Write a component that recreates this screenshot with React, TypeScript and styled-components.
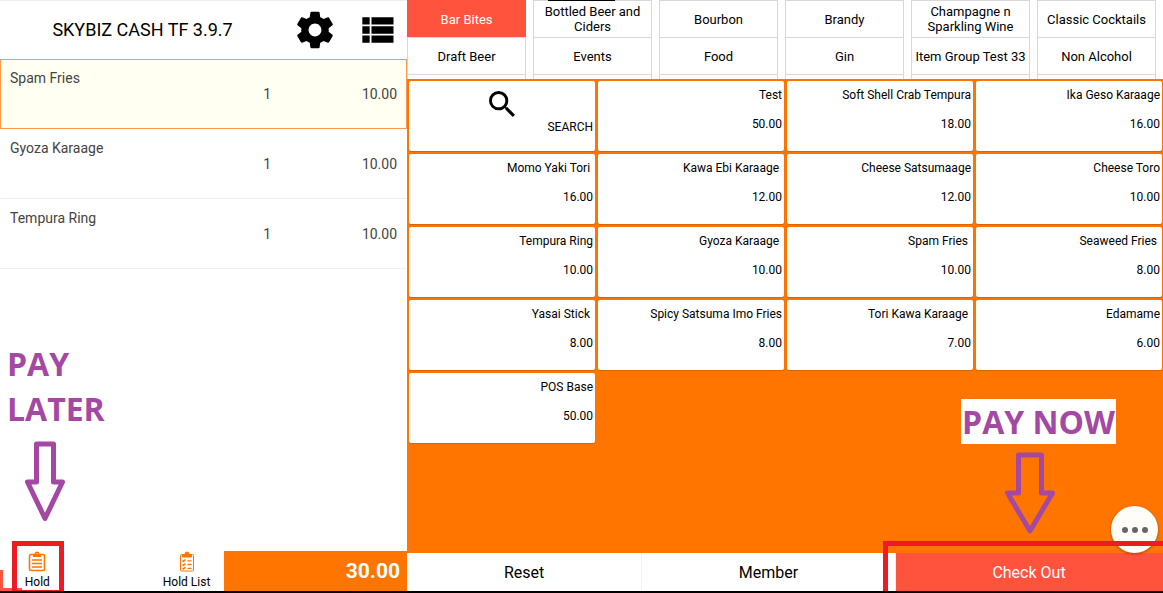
import React from "react";
import styled, { createGlobalStyle } from "styled-components";

const ORANGE = "#ff7500";
const CORAL = "#ff533d";
const PURPLE = "#a349a4";
const MARKER = "#ed1c24";

const GlobalStyle = createGlobalStyle`
  *, *::before, *::after { box-sizing: border-box; }
  body { margin: 0; background: #fff; font-family: Roboto, "Liberation Sans", sans-serif; color: #000; }
  button { font: inherit; color: inherit; border: 0; padding: 0; margin: 0; background: none; cursor: pointer; }
  h1, p, ul { margin: 0; padding: 0; list-style: none; }
`;

const Screen = styled.div`
  position: relative;
  display: grid;
  grid-template-columns: 35fr 65fr;
  min-height: 100vh;
  border-bottom: 2px solid #000;
  overflow: hidden;
`;

const OrderPanel = styled.section`
  position: relative;
  display: flex;
  flex-direction: column;
  min-width: 0;
  border-top: 1px solid #eee;
`;

const Header = styled.header`
  display: flex;
  align-items: center;
  justify-content: flex-end;
  height: 58px;
  padding-right: 8px;
`;

const Title = styled.h1`
  flex: 1;
  padding-right: 8px;
  text-align: center;
  font-size: 18px;
  font-weight: 400;
  line-height: 24px;
`;

const IconButton = styled.button`
  display: flex;
  margin-left: 18px;
  &:first-of-type { margin-left: 0; }
`;

const OrderList = styled.ul`
  flex: 1;
`;

const OrderLine = styled.li<{ $selected?: boolean }>`
  display: grid;
  grid-template-columns: 1fr 92px 126px;
  height: 70px;
  padding: 10px 9px;
  border: 1px solid ${(p) => (p.$selected ? "#ff9a4d" : "transparent")};
  border-bottom-color: ${(p) => (p.$selected ? "#ff9a4d" : "#eee")};
  background: ${(p) => (p.$selected ? "#fffff2" : "#fff")};
  color: #444;
  font-size: 14px;
  line-height: 16px;
`;

const Figure = styled.span`
  padding-top: 16px;
  text-align: right;
`;

const OrderFooter = styled.footer`
  display: grid;
  grid-template-columns: 55fr 45fr;
  height: 40px;
`;

const HoldBar = styled.div`
  display: grid;
  grid-template-columns: repeat(3, 1fr);
`;

const HoldButton = styled.button<{ $column: number }>`
  grid-column: ${(p) => p.$column};
  display: flex;
  flex-direction: column;
  align-items: center;
  justify-content: flex-end;
  gap: 2px;
  padding-bottom: 2px;
  font-size: 12px;
  line-height: 14px;
`;

const Total = styled.output`
  display: flex;
  align-items: center;
  justify-content: flex-end;
  padding-right: 7px;
  background: ${ORANGE};
  color: #fff;
  font-size: 21px;
  font-weight: 700;
`;

const CatalogPanel = styled.section`
  position: relative;
  display: flex;
  flex-direction: column;
  min-width: 0;
`;

const Categories = styled.nav`
  display: grid;
  grid-template-columns: repeat(6, 1fr);
  grid-auto-rows: 37px;
  height: 79px;
  overflow: hidden;
`;

const Category = styled.button<{ $active?: boolean }>`
  margin: 0 7px 0 0;
  border: 1px solid ${(p) => (p.$active ? CORAL : "#d8d8d8")};
  border-bottom: 0;
  background: ${(p) => (p.$active ? CORAL : "#fff")};
  color: ${(p) => (p.$active ? "#fff" : "#000")};
  font-size: 13px;
  line-height: 15px;
`;

const Products = styled.div`
  flex: 1;
  display: grid;
  grid-template-columns: repeat(4, 1fr);
  grid-auto-rows: 70px;
  gap: 3px;
  padding: 2px 1px 2px 2px;
  background: ${ORANGE};
`;

const Product = styled.button`
  display: flex;
  flex-direction: column;
  align-items: flex-end;
  gap: 13px;
  padding: 6px 2px;
  border-radius: 2px;
  background: #fff;
  box-shadow: 0 1px 1px #d86400;
  font-size: 12px;
  line-height: 16px;
  white-space: pre;
`;

const SearchTile = styled(Product)`
  gap: 2px;
  padding-top: 10px;
  svg { align-self: center; }
`;

const Actions = styled.footer`
  display: grid;
  grid-template-columns: 235fr 254fr 267fr;
  height: 38px;
`;

const Action = styled.button<{ $primary?: boolean }>`
  border-right: 1px solid ${(p) => (p.$primary ? CORAL : "#f2f2f2")};
  background: ${(p) => (p.$primary ? CORAL : "#fff")};
  color: ${(p) => (p.$primary ? "#fff" : "#000")};
  font-size: 16px;
`;

const MoreButton = styled.button`
  position: absolute;
  right: 5px;
  bottom: 38px;
  display: flex;
  align-items: center;
  justify-content: center;
  gap: 4px;
  width: 47px;
  height: 47px;
  border-radius: 50%;
  background: #fffdf8;
  box-shadow: 0 1px 3px rgba(0, 0, 0, 0.35);
`;

const Dot = styled.span`
  width: 6px;
  height: 6px;
  border-radius: 50%;
  background: #666;
`;

const Callout = styled.div`
  position: absolute;
  display: flex;
  flex-direction: column;
  color: ${PURPLE};
  font-family: "Open Sans", "Noto Sans", sans-serif;
  font-size: 32px;
  font-weight: 700;
  line-height: 45px;
  pointer-events: none;
`;

const PayLater = styled(Callout)`
  left: 7px;
  bottom: 68px;
  width: 110px;
  gap: 10px;
  svg { margin-left: 17px; }
`;

const PayNow = styled(Callout)`
  right: 47px;
  bottom: 56px;
  width: 155px;
  gap: 8px;
  svg { margin-left: 44px; }
`;

const PayNowLabel = styled.p`
  background: #fff;
  text-align: center;
  white-space: nowrap;
`;

const HoldMarker = styled.div`
  position: absolute;
  left: 12px;
  bottom: -2px;
  width: 52px;
  height: 52px;
  border: 5px solid ${MARKER};
  border-bottom-width: 3px;
  pointer-events: none;
`;

const CheckOutMarker = styled.div`
  position: absolute;
  right: 0;
  bottom: -2px;
  width: 280px;
  height: 52px;
  border: solid ${MARKER};
  border-width: 5px 0 0 5px;
  pointer-events: none;
`;

const Corner = styled.div`
  position: absolute;
  left: 0;
  bottom: 0;
  width: 22px;
  height: 21px;
  border: solid ${CORAL};
  border-width: 0 0 3px 3px;
  pointer-events: none;
`;

const Handle = styled.div`
  position: absolute;
  top: 0;
  left: 141px;
  width: 67px;
  height: 1px;
  background: #000;
`;

const order = [
  { name: "Spam Fries", qty: 1, price: "10.00" },
  { name: "Gyoza Karaage", qty: 1, price: "10.00" },
  { name: "Tempura Ring", qty: 1, price: "10.00" },
];

const categories = [
  "Bar Bites", "Bottled Beer and Ciders", "Bourbon", "Brandy", "Champagne n Sparkling Wine", "Classic Cocktails",
  "Draft Beer", "Events", "Food", "Gin", "Item Group Test 33", "Non Alcohol",
  "", "", "", "", "", "",
];

const products: [string, string][] = [
  ["Test", "50.00"], ["Soft Shell Crab Tempura", "18.00"], ["Ika Geso Karaage", "16.00"],
  ["Momo Yaki Tori ", "16.00"], ["Kawa Ebi Karaage ", "12.00"], ["Cheese Satsumaage", "12.00"], ["Cheese Toro", "10.00"],
  ["Tempura Ring", "10.00"], ["Gyoza Karaage ", "10.00"], ["Spam Fries ", "10.00"], ["Seaweed Fries ", "8.00"],
  ["Yasai Stick ", "8.00"], ["Spicy Satsuma Imo Fries", "8.00"], ["Tori Kawa Karaage ", "7.00"], ["Edamame", "6.00"],
  ["POS Base", "50.00"],
];

const GearIcon = () => (
  <svg width="44" height="44" viewBox="0 0 24 24" aria-hidden="true">
    <path d="M19.43 12.98c.04-.32.07-.64.07-.98s-.03-.66-.07-.98l2.11-1.65c.19-.15.24-.42.12-.64l-2-3.46c-.12-.22-.39-.3-.61-.22l-2.49 1c-.52-.4-1.08-.73-1.69-.98l-.38-2.65A.488.488 0 0 0 14 2h-4c-.25 0-.46.18-.49.42l-.38 2.65c-.61.25-1.17.59-1.69.98l-2.49-1c-.23-.09-.49 0-.61.22l-2 3.46c-.13.22-.07.49.12.64l2.11 1.65c-.04.32-.07.65-.07.98s.03.66.07.98l-2.11 1.65c-.19.15-.24.42-.12.64l2 3.46c.12.22.39.3.61.22l2.49-1c.52.4 1.08.73 1.69.98l.38 2.65c.03.24.24.42.49.42h4c.25 0 .46-.18.49-.42l.38-2.65c.61-.25 1.17-.59 1.69-.98l2.49 1c.23.09.49 0 .61-.22l2-3.46c.12-.22.07-.49-.12-.64l-2.11-1.65zM12 15.5c-1.93 0-3.5-1.57-3.5-3.5s1.57-3.5 3.5-3.5 3.5 1.57 3.5 3.5-1.57 3.5-3.5 3.5z" />
  </svg>
);

const ListIcon = () => (
  <svg width="44" height="44" viewBox="0 0 24 24" aria-hidden="true">
    <path d="M4 14h4v-4H4v4zm0 5h4v-4H4v4zM4 9h4V5H4v4zm5 5h12v-4H9v4zm0 5h12v-4H9v4zM9 5v4h12V5H9z" />
  </svg>
);

const SearchIcon = () => (
  <svg width="26" height="26" viewBox="3 3 17.5 17.5" aria-hidden="true">
    <path d="M15.5 14h-.79l-.28-.27A6.471 6.471 0 0 0 16 9.5 6.5 6.5 0 1 0 9.5 16c1.61 0 3.09-.59 4.23-1.57l.27.28v.79l5 4.99L20.49 19l-4.99-5zm-6 0C7.01 14 5 11.99 5 9.5S7.01 5 9.5 5 14 7.01 14 9.5 11.99 14 9.5 14z" />
  </svg>
);

const ClipboardIcon = () => (
  <svg width="18" height="22" viewBox="0 0 18 22" fill="none" stroke={ORANGE} strokeWidth="1.6" aria-hidden="true">
    <rect x="1.5" y="3.5" width="15" height="16" rx="1.5" />
    <path d="M5 3h8v3H5z" fill={ORANGE} stroke="none" />
    <circle cx="9" cy="2.8" r="1.5" />
    <path d="M4 9h10M4 12.5h10M4 16h10" />
  </svg>
);

const ChecklistIcon = () => (
  <svg width="16" height="22" viewBox="0 0 16 22" fill="none" stroke={ORANGE} aria-hidden="true">
    <rect x="1.5" y="3.5" width="13" height="16.5" rx="1" />
    <path d="M3.5 6V3.5h2.3a2.2 2.5 0 0 1 4.4 0h2.3V6z" fill={ORANGE} />
    <path d="M3.5 9.5l1 1 2-2M3.5 13.5l1 1 2-2M3.5 17l1 1 2-2M8.5 9.8h4M8.5 13.5h4M8.5 17.3h4" strokeWidth="1.3" />
  </svg>
);

const ArrowLater = () => (
  <svg width="42" height="82" viewBox="0 0 42 82" fill="none" stroke={PURPLE} strokeWidth="5" strokeLinejoin="round" aria-hidden="true">
    <path d="M12.5 3h17v38h9L21 77.5 3.5 41h9z" />
  </svg>
);

const ArrowNow = () => (
  <svg width="52" height="83" viewBox="0 0 52 83" fill="none" stroke={PURPLE} strokeWidth="5" strokeLinejoin="round" aria-hidden="true">
    <path d="M13.5 3h23v38h11L25 79 2.5 41h11z" />
  </svg>
);

export default function App() {
  return (
    <>
      <GlobalStyle />
      <Screen>
        <OrderPanel>
          <Header>
            <Title>SKYBIZ CASH TF 3.9.7</Title>
            <IconButton aria-label="Settings"><GearIcon /></IconButton>
            <IconButton aria-label="Order list"><ListIcon /></IconButton>
          </Header>
          <OrderList>
            {order.map((line, i) => (
              <OrderLine key={line.name} $selected={i === 0}>
                <span>{line.name}</span>
                <Figure>{line.qty}</Figure>
                <Figure>{line.price}</Figure>
              </OrderLine>
            ))}
          </OrderList>
          <OrderFooter>
            <HoldBar>
              <HoldButton $column={1}><ClipboardIcon />Hold</HoldButton>
              <HoldButton $column={3}><ChecklistIcon />Hold List</HoldButton>
            </HoldBar>
            <Total>30.00</Total>
          </OrderFooter>
          <Corner />
          <PayLater>
            <p>PAY<br />LATER</p>
            <ArrowLater />
          </PayLater>
          <HoldMarker />
        </OrderPanel>
        <CatalogPanel>
          <Categories>
            {categories.map((name, i) => (
              <Category key={i} $active={i === 0}>{name}</Category>
            ))}
          </Categories>
          <Handle />
          <Products>
            <SearchTile><SearchIcon />SEARCH</SearchTile>
            {products.map(([name, price]) => (
              <Product key={name}>
                <span>{name}</span>
                <span>{price}</span>
              </Product>
            ))}
          </Products>
          <Actions>
            <Action>Reset</Action>
            <Action>Member</Action>
            <Action $primary>Check Out</Action>
          </Actions>
          <MoreButton aria-label="More"><Dot /><Dot /><Dot /></MoreButton>
          <PayNow>
            <PayNowLabel>PAY NOW</PayNowLabel>
            <ArrowNow />
          </PayNow>
          <CheckOutMarker />
        </CatalogPanel>
      </Screen>
    </>
  );
}
